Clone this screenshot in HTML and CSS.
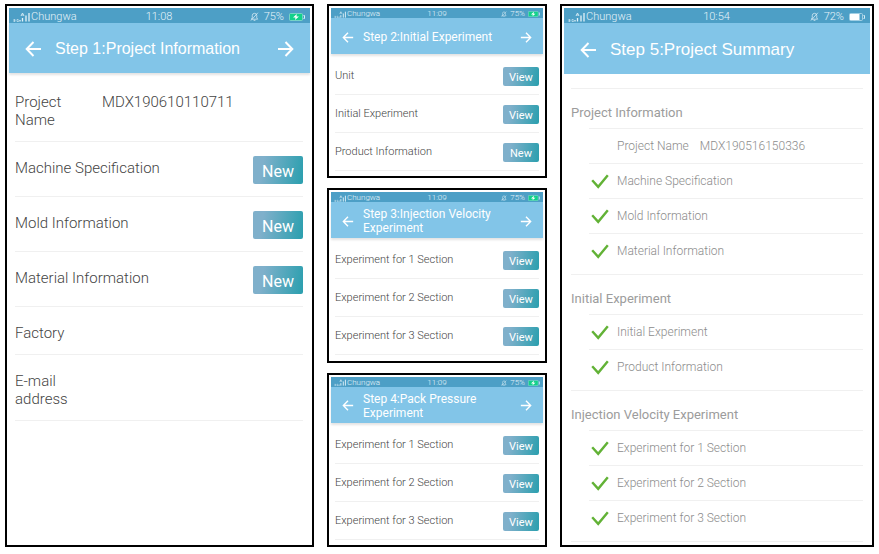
FILE: index.html
```html
<!DOCTYPE html>
<html lang="en">
<head>
  <meta charset="UTF-8">
  <meta name="viewport" content="width=device-width, initial-scale=1.0">
  <title>Project Steps</title>
  <link rel="stylesheet" href="styles.css">
</head>
<body>

  <!-- Shared icons -->
  <svg class="icon-defs" aria-hidden="true">
    <symbol id="icon-back" viewBox="0 0 16 16">
      <path d="M15.5 8H1.5M8 1L1.2 8L8 15" fill="none" stroke="currentColor" stroke-width="2"/>
    </symbol>
    <symbol id="icon-next" viewBox="0 0 16 16">
      <path d="M.5 8H14.5M8 1L14.8 8L8 15" fill="none" stroke="currentColor" stroke-width="2"/>
    </symbol>
    <symbol id="icon-signal" viewBox="0 0 18 10">
      <path d="M.5 7.5h1.5v2h-1.5M.5 8.5h1.5M5.5 7.5h-1.5v2h1.5v-1" fill="none" stroke="currentColor" stroke-width=".6"/>
      <path d="M7 9.5v-1.5M9.500 9.500v-3.500M13 9.500v-6M16 9.500v-8.500" fill="none" stroke="currentColor" stroke-width="1.3"/>
      <path d="M8 4l1.500-3l1.500 3M8.500 3h2" fill="none" stroke="currentColor" stroke-width=".8"/>
    </symbol>
    <symbol id="icon-bell" viewBox="0 0 10 10">
      <path d="M1.500 8h7L7.500 6.500V4a2.500 2.500 0 0 0-5 0V6.500zM4 9.300h2M8.800.8L1 9.500" fill="none" stroke="currentColor" stroke-width=".8"/>
    </symbol>
    <symbol id="icon-charging" viewBox="0 0 16 8">
      <rect x=".5" y=".5" width="13" height="7" rx="1" fill="#12d18a" stroke="#a5e6dc" stroke-width=".6"/>
      <path d="M14.500 2.500h1v3h-1" fill="none" stroke="#d5f3f4"/>
      <path d="M7.800 1L4 4.500h2.500L6 7L10 3.500H7.500z" fill="#fff"/>
    </symbol>
    <symbol id="icon-battery" viewBox="0 0 16 8">
      <rect x=".5" y=".5" width="13" height="7" rx="1" fill="none" stroke="#b9dcec" stroke-width=".8"/>
      <rect x="1" y="1" width="9.500" height="6" fill="#fff"/>
      <path d="M14.500 2.500h1v3h-1" fill="none" stroke="#d5ecf5"/>
    </symbol>
    <symbol id="icon-check" viewBox="0 0 18 15">
      <path d="M1.200 6.200L7.200 12.800L16.800 1.200" fill="none" stroke="#62b236" stroke-width="2.4"/>
    </symbol>
  </svg>

  <main class="board">

    <!-- Step 1 -->
    <section class="screen">
      <div class="status">
        <span class="carrier"><svg class="signal"><use href="#icon-signal"/></svg>Chungwa</span>
        <span class="time">11:08</span>
        <span class="power"><svg class="bell"><use href="#icon-bell"/></svg>75%<svg class="battery"><use href="#icon-charging"/></svg></span>
      </div>
      <header class="bar">
        <button class="nav" aria-label="Back"><svg><use href="#icon-back"/></svg></button>
        <h2>Step 1:Project Information</h2>
        <button class="nav" aria-label="Next"><svg><use href="#icon-next"/></svg></button>
      </header>
      <ul class="rows">
        <li><span class="label short">Project Name</span><span class="value">MDX190610110711</span></li>
        <li><span class="label">Machine Specification</span><button class="action">New</button></li>
        <li><span class="label">Mold Information</span><button class="action">New</button></li>
        <li><span class="label">Material Information</span><button class="action">New</button></li>
        <li><span class="label">Factory</span></li>
        <li><span class="label short">E-mail address</span></li>
      </ul>
    </section>

    <div class="stack">
      <!-- Step 2 -->
      <section class="screen small">
        <div class="status">
          <span class="carrier"><svg class="signal"><use href="#icon-signal"/></svg>Chungwa</span>
          <span class="time">11:09</span>
          <span class="power"><svg class="bell"><use href="#icon-bell"/></svg>75%<svg class="battery"><use href="#icon-charging"/></svg></span>
        </div>
        <header class="bar">
          <button class="nav" aria-label="Back"><svg><use href="#icon-back"/></svg></button>
          <h2>Step 2:Initial Experiment</h2>
          <button class="nav" aria-label="Next"><svg><use href="#icon-next"/></svg></button>
        </header>
        <ul class="rows">
          <li><span class="label">Unit</span><button class="action">View</button></li>
          <li><span class="label">Initial Experiment</span><button class="action">View</button></li>
          <li><span class="label">Product Information</span><button class="action">New</button></li>
        </ul>
      </section>

      <!-- Step 3 -->
      <section class="screen small">
        <div class="status">
          <span class="carrier"><svg class="signal"><use href="#icon-signal"/></svg>Chungwa</span>
          <span class="time">11:09</span>
          <span class="power"><svg class="bell"><use href="#icon-bell"/></svg>75%<svg class="battery"><use href="#icon-charging"/></svg></span>
        </div>
        <header class="bar">
          <button class="nav" aria-label="Back"><svg><use href="#icon-back"/></svg></button>
          <h2>Step 3:Injection Velocity Experiment</h2>
          <button class="nav" aria-label="Next"><svg><use href="#icon-next"/></svg></button>
        </header>
        <ul class="rows">
          <li><span class="label">Experiment for 1 Section</span><button class="action">View</button></li>
          <li><span class="label">Experiment for 2 Section</span><button class="action">View</button></li>
          <li><span class="label">Experiment for 3 Section</span><button class="action">View</button></li>
        </ul>
      </section>

      <!-- Step 4 -->
      <section class="screen small">
        <div class="status">
          <span class="carrier"><svg class="signal"><use href="#icon-signal"/></svg>Chungwa</span>
          <span class="time">11:09</span>
          <span class="power"><svg class="bell"><use href="#icon-bell"/></svg>75%<svg class="battery"><use href="#icon-charging"/></svg></span>
        </div>
        <header class="bar">
          <button class="nav" aria-label="Back"><svg><use href="#icon-back"/></svg></button>
          <h2>Step 4:Pack Pressure Experiment</h2>
          <button class="nav" aria-label="Next"><svg><use href="#icon-next"/></svg></button>
        </header>
        <ul class="rows">
          <li><span class="label">Experiment for 1 Section</span><button class="action">View</button></li>
          <li><span class="label">Experiment for 2 Section</span><button class="action">View</button></li>
          <li><span class="label">Experiment for 3 Section</span><button class="action">View</button></li>
        </ul>
      </section>
    </div>

    <!-- Step 5 -->
    <section class="screen">
      <div class="status">
        <span class="carrier"><svg class="signal"><use href="#icon-signal"/></svg>Chungwa</span>
        <span class="time">10:54</span>
        <span class="power"><svg class="bell"><use href="#icon-bell"/></svg>72%<svg class="battery"><use href="#icon-battery"/></svg></span>
      </div>
      <header class="bar flat">
        <button class="nav" aria-label="Back"><svg><use href="#icon-back"/></svg></button>
        <h2>Step 5:Project Summary</h2>
      </header>
      <div class="summary">
        <div class="group">
          <h3>Project Information</h3>
          <ul>
            <li><span class="mark"></span>Project Name<span class="code">MDX190516150336</span></li>
            <li><svg class="mark"><use href="#icon-check"/></svg>Machine Specification</li>
            <li><svg class="mark"><use href="#icon-check"/></svg>Mold Information</li>
            <li><svg class="mark"><use href="#icon-check"/></svg>Material Information</li>
          </ul>
        </div>
        <div class="group">
          <h3>Initial Experiment</h3>
          <ul>
            <li><svg class="mark"><use href="#icon-check"/></svg>Initial Experiment</li>
            <li><svg class="mark"><use href="#icon-check"/></svg>Product Information</li>
          </ul>
        </div>
        <div class="group">
          <h3>Injection Velocity Experiment</h3>
          <ul>
            <li><svg class="mark"><use href="#icon-check"/></svg>Experiment for 1 Section</li>
            <li><svg class="mark"><use href="#icon-check"/></svg>Experiment for 2 Section</li>
            <li><svg class="mark"><use href="#icon-check"/></svg>Experiment for 3 Section</li>
          </ul>
        </div>
      </div>
    </section>

  </main>

</body>
</html>
```
FILE: styles.css
```css
* {
  box-sizing: border-box;
}

body {
  margin: 0;
  padding: 4px 5px 7px;
  background: #fff;
  color: #444;
  font-family: Roboto, "Liberation Sans", sans-serif;
  font-weight: 300;
}

ul, h2, h3 {
  margin: 0;
  padding: 0;
  list-style: none;
}

button {
  border: none;
  padding: 0;
  font-family: inherit;
  cursor: pointer;
}

svg {
  display: block;
}

.icon-defs {
  display: none;
}

.board {
  display: grid;
  grid-template-columns: 309fr 220fr 314fr;
  gap: 13px;
}

.stack {
  display: flex;
  flex-direction: column;
  gap: 10px;
}

.stack .screen {
  flex: 1;
}

.screen {
  border: 2px solid #000;
  padding: 2px;
}

/* Phone status bar */
.status {
  display: grid;
  grid-template-columns: 1fr auto 1fr;
  align-items: center;
  height: 15px;
  padding: 2px 5px 0 4px;
  background: #4d9fc6;
  color: #e4f3f9;
  font-size: 11px;
  line-height: 13px;
}

.carrier {
  display: flex;
  align-items: center;
}

.power {
  display: flex;
  align-items: center;
  justify-content: flex-end;
  gap: 5px;
}

.signal {
  width: 18px;
  height: 10px;
}

.bell {
  width: 9px;
  height: 9px;
}

.battery {
  width: 16px;
  height: 8px;
}

/* Title bar */
.bar {
  display: flex;
  align-items: center;
  gap: 13px;
  height: 50px;
  padding: 2px 16px 0;
  background: #82c5e8;
  color: #fff;
  box-shadow: 0 2px 2px #e4e4e4;
}

.bar h2 {
  flex: 1;
  font-family: "Liberation Sans", sans-serif;
  font-size: 16px;
  font-weight: 400;
  line-height: 20px;
}

.bar.flat {
  height: 51px;
  box-shadow: none;
}

.bar.flat h2 {
  font-size: 17px;
}

.nav {
  background: none;
  color: #fff;
}

.nav svg {
  width: 17px;
  height: 16px;
}

/* Form rows */
.rows {
  padding: 3px 7px 0 6px;
}

.rows li {
  display: flex;
  align-items: flex-start;
  padding: 14px 0 12px;
  border-bottom: 1px solid #f0f0f0;
  font-size: 15px;
  line-height: 18px;
}

.label {
  flex: 1;
  padding-top: 3px;
}

.label.short {
  flex: none;
  width: 64px;
  margin-right: 23px;
}

.value {
  padding-top: 3px;
}

.action {
  width: 50px;
  height: 28px;
  padding-top: 2px;
  border-radius: 2px;
  background: linear-gradient(100deg, #7fb0cb 20%, #2a9fae);
  color: #fff;
  font-size: 16px;
}

/* Half size screens */
.small .status {
  height: 10px;
  padding: 2px 3px 0;
  font-size: 8px;
  line-height: 8px;
}

.small .power {
  gap: 3px;
}

.small .signal {
  width: 13px;
  height: 7px;
}

.small .bell {
  width: 6px;
  height: 6px;
}

.small .battery {
  width: 12px;
  height: 6px;
}

.small .bar {
  gap: 9px;
  height: 36px;
  padding: 2px 11px 0;
}

.small .bar h2 {
  font-family: inherit;
  font-size: 12px;
  line-height: 14px;
}

.small .nav svg {
  width: 12px;
  height: 11px;
}

.small .rows {
  padding: 3px 4px 0;
}

.small .rows li {
  padding: 10px 0 8px;
  font-size: 11px;
  line-height: 13px;
}

.small .label {
  padding-top: 2px;
}

.small .action {
  width: 36px;
  height: 19px;
  font-size: 11px;
}

/* Summary list */
.summary {
  padding: 14px 7px 1px;
  color: #8c8c8c;
}

.group {
  padding-bottom: 6px;
  border-top: 1px solid #f0f0f0;
}

.group:last-child {
  border-bottom: 1px solid #f0f0f0;
}

.group h3 {
  padding: 15px 0 6px;
  color: #9c9c9c;
  font-size: 13px;
  font-weight: 400;
  line-height: 18px;
}

.group ul {
  padding-left: 18px;
}

.group li {
  display: flex;
  align-items: center;
  height: 35px;
  border-top: 1px solid #f0f0f0;
  font-size: 12px;
}

.mark {
  width: 18px;
  height: 15px;
  margin: 0 8px 0 2px;
}

.code {
  margin-left: 11px;
}
```
